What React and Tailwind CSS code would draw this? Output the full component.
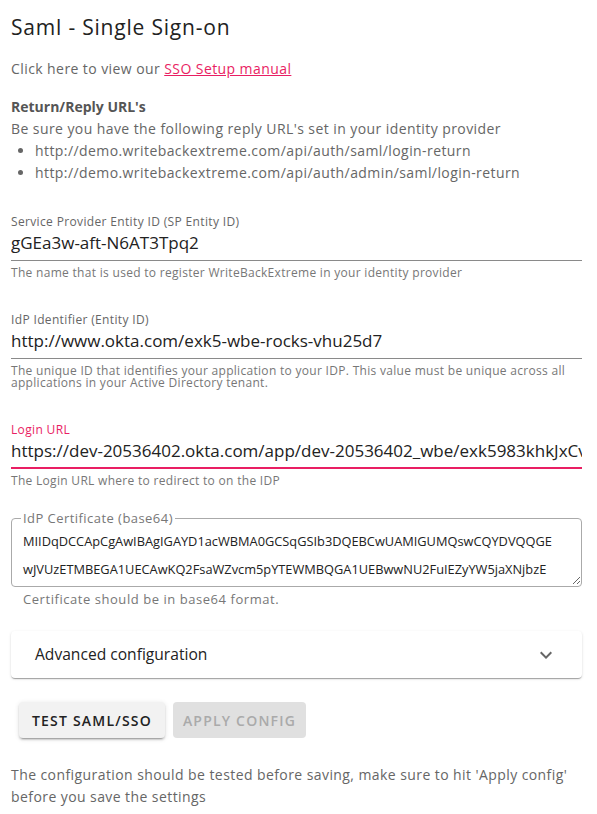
import React from "react";

const font = { fontFamily: '"Open Sans", "Liberation Sans", sans-serif' };

const cert =
  "MIIDqDCCApCgAwIBAgIGAYD1acWBMA0GCSqGSIb3DQEBCwUAMIGUMQswCQYDVQQGE\nwJVUzETMBEGA1UECAwKQ2FsaWZvcm5pYTEWMBQGA1UEBwwNU2FuIEZyYW5jaXNjbzE\nNMAsGA1UECgwET2t0YTEUMBIGA1UECwwLU1NPUHJvdmlkZXIxFTATBgNVBAMMDGRldi0";

function LineField({ label, value, helper, active }) {
  return (
    <div>
      <div className={"text-[12px] leading-4 tracking-[0.35px] " + (active ? "text-[#e91e63]" : "text-[#666]")}>{label}</div>
      <div
        className={
          "pt-[1px] text-[17px] leading-6 text-[#222] whitespace-nowrap overflow-hidden " +
          (active ? "border-b-2 border-[#e91e63] pb-[4px]" : "border-b border-[#8a8a8a] pb-[5px]")
        }
      >
        {value}
      </div>
      <div className="mt-[6px] text-[12px] leading-[12px] tracking-[0.3px] text-[#777]">{helper}</div>
    </div>
  );
}

export default function App() {
  return (
    <div className="min-h-screen bg-white pl-[11px] pr-[15px] pt-[13px] text-[#666] tracking-[0.42px]" style={font}>
      <h1 className="text-[21px] leading-7 tracking-[0.8px] text-[#222]">Saml - Single Sign-on</h1>

      <p className="mt-[17px] text-[14px] leading-[22px]">
        Click here to view our{" "}
        <a href="#" className="text-[#e91e63] underline">SSO Setup manual</a>
      </p>

      <div className="mt-[16px] text-[14px] leading-[22px]">
        <div className="font-bold tracking-normal text-[#555]">Return/Reply URL's</div>
        <div>Be sure you have the following reply URL's set in your identity provider</div>
        <ul className="list-disc pl-[24px]">
          <li>http://demo.writebackextreme.com/api/auth/saml/login-return</li>
          <li>http://demo.writebackextreme.com/api/auth/admin/saml/login-return</li>
        </ul>
      </div>

      <div className="mt-[30px] flex flex-col gap-[33px] tracking-normal">
        <LineField
          label="Service Provider Entity ID (SP Entity ID)"
          value="gGEa3w-aft-N6AT3Tpq2"
          helper="The name that is used to register WriteBackExtreme in your identity provider"
        />
        <LineField
          label="IdP Identifier (Entity ID)"
          value="http://www.okta.com/exk5-wbe-rocks-vhu25d7"
          helper="The unique ID that identifies your application to your IDP. This value must be unique across all applications in your Active Directory tenant."
        />
        <LineField
          label="Login URL"
          value="https://dev-20536402.okta.com/app/dev-20536402_wbe/exk5983khkJxCvlhU5d7/sso/saml"
          helper="The Login URL where to redirect to on the IDP"
          active
        />
      </div>

      <fieldset className="mt-[26px] rounded border border-[#aaa] pl-[9px] pr-0 pb-[1px] tracking-normal">
        <legend className="px-[2px] text-[13px] leading-[10px] tracking-[0.45px] text-[#777]">IdP Certificate (base64)</legend>
        <textarea
          readOnly
          value={cert}
          wrap="off"
          className="block h-[62px] w-full resize-y overflow-x-hidden overflow-y-scroll whitespace-pre pl-[2px] pt-[4px] text-[12.8px] leading-[28px] text-[#222] outline-none"
        />
      </fieldset>
      <div className="mt-[4px] pl-[12px] text-[13px] leading-4 tracking-[0.55px] text-[#777]">Certificate should be in base64 format.</div>

      <div className="mt-[24px] flex h-[47px] items-center justify-between rounded bg-white pl-[24px] pr-[24px] tracking-normal shadow-[0_2px_1px_-1px_rgba(0,0,0,0.2),0_1px_1px_0_rgba(0,0,0,0.14),0_1px_3px_0_rgba(0,0,0,0.12)]">
        <span className="text-[15.6px] text-[#222]">Advanced configuration</span>
        <svg width="24" height="24" viewBox="0 0 24 24" className="fill-[#666]">
          <path d="M16.59 8.59 12 13.17 7.41 8.59 6 10l6 6 6-6z" />
        </svg>
      </div>

      <div className="mt-[24px] flex gap-[8px] pl-[8px]">
        <button className="h-[36px] rounded bg-[#f2f2f2] px-[13px] text-[14px] font-semibold uppercase tracking-[1.2px] text-[#222] shadow-[0_3px_1px_-2px_rgba(0,0,0,0.2),0_2px_2px_0_rgba(0,0,0,0.14),0_1px_5px_0_rgba(0,0,0,0.12)]">
          Test SAML/SSO
        </button>
        <button disabled className="h-[36px] rounded bg-[#e0e0e0] px-[10px] text-[14px] font-semibold uppercase tracking-[1.2px] text-[#aaa]">
          Apply config
        </button>
      </div>

      <p className="mt-[26px] text-[14px] leading-[22px]">
        The configuration should be tested before saving, make sure to hit 'Apply config' before you save the settings
      </p>
    </div>
  );
}
